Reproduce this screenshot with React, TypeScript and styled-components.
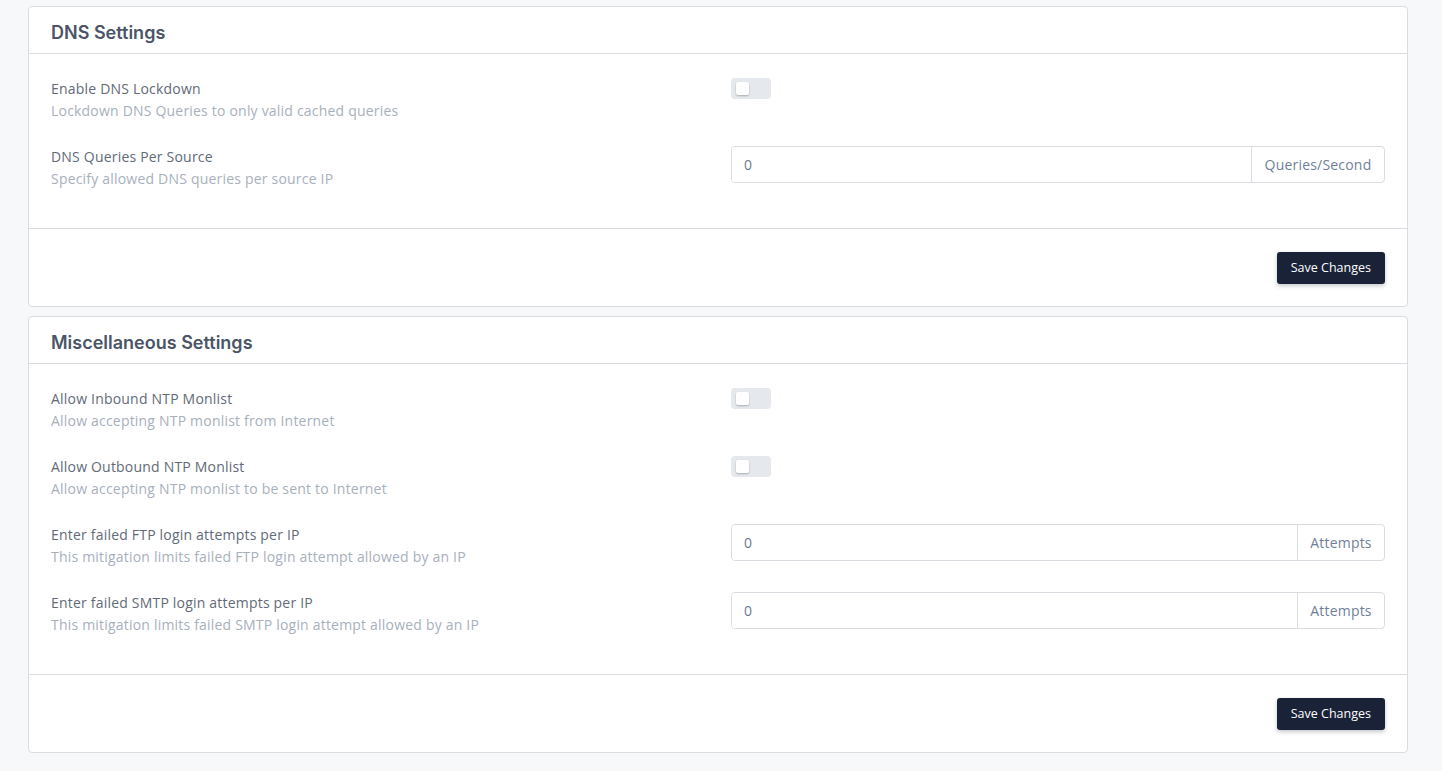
import React, { useState } from 'react';
import styled, { createGlobalStyle } from 'styled-components';

const GlobalStyle = createGlobalStyle`
    html, body {
        margin: 0;
        padding: 0;
        background: #f7f8fa;
        font-family: "Open Sans", "Liberation Sans", sans-serif;
    }
    * { box-sizing: border-box; }
`
const Page = styled.div`
    padding: 6px 34px 18px 28px;
    display: flex;
    flex-direction: column;
    gap: 9px;
`
const Card = styled.section`
    background: #fff;
    border: 1px solid #d9dce1;
    border-radius: 4px;
`
const CardHeader = styled.div`
    height: 47px;
    padding: 5px 22px 0;
    display: flex;
    align-items: center;
    border-bottom: 1px solid #d9dce1;
`
const Title = styled.h2`
    margin: 0;
    font-family: Inter, "Open Sans", sans-serif;
    font-size: 18px;
    font-weight: 600;
    color: #4a5568;
`
const CardBody = styled.div`
    padding: 24px 22px 14px;
    border-bottom: 1px solid #d9dce1;
`
const Row = styled.div`
    display: grid;
    grid-template-columns: 1fr 1fr;
    column-gap: 26px;
    height: 44px;
    margin-bottom: 24px;
`
const Info = styled.div`
    display: flex;
    flex-direction: column;
    letter-spacing: 0.2px;
`
const Label = styled.div`
    font-size: 14px;
    line-height: 21px;
    color: #626a78;
`
const Hint = styled.div`
    font-size: 14px;
    line-height: 23px;
    color: #a8b0bc;
`
const Switch = styled.button<{ $on: boolean }>`
    width: 40px;
    height: 21px;
    border: none;
    border-radius: 4px;
    padding: 4px 5px;
    background: ${(p) => (p.$on ? '#1a2238' : '#e5e8ec')};
    display: flex;
    justify-content: ${(p) => (p.$on ? 'flex-end' : 'flex-start')};
    cursor: pointer;
`
const Knob = styled.span`
    width: 13px;
    height: 13px;
    border-radius: 2px;
    background: #fff;
    box-shadow: 0 1px 2px rgba(0,0,0,0.25);
`
const InputGroup = styled.div`
    display: flex;
    height: 37px;
    border: 1px solid #d9dce1;
    border-radius: 4px;
    overflow: hidden;
`
const Input = styled.input`
    flex: 1;
    min-width: 0;
    border: none;
    outline: none;
    padding: 0 12px;
    font-family: inherit;
    font-size: 14px;
    color: #6b7a90;
`
const Addon = styled.span<{ $w: number }>`
    width: ${(p) => p.$w}px;
    border-left: 1px solid #d9dce1;
    display: flex;
    align-items: center;
    justify-content: center;
    font-size: 14px;
    letter-spacing: 0.2px;
    color: #6f7f99;
`
const CardFooter = styled.div`
    height: 77px;
    padding: 0 22px;
    display: flex;
    align-items: center;
    justify-content: flex-end;
`
const SaveButton = styled.button`
    height: 32px;
    padding: 0 14px;
    border: none;
    border-radius: 3px;
    background: #1a2238;
    color: #fff;
    font-family: inherit;
    font-size: 12.5px;
    box-shadow: 0 2px 4px rgba(26,34,56,0.25);
    cursor: pointer;
`

type Field =
    | { kind: 'toggle'; label: string; hint: string }
    | { kind: 'input'; label: string; hint: string; unit: string; unitWidth: number };

const Toggle: React.FC = () => {
    const [on, setOn] = useState(false);
    return (
        <div>
            <Switch $on={on} onClick={() => setOn(!on)}><Knob /></Switch>
        </div>
    );
}

const SettingsCard: React.FC<{ title: string; fields: Field[] }> = ({ title, fields }) => (
    <Card>
        <CardHeader><Title>{title}</Title></CardHeader>
        <CardBody>
            {fields.map((f) => (
                <Row key={f.label}>
                    <Info>
                        <Label>{f.label}</Label>
                        <Hint>{f.hint}</Hint>
                    </Info>
                    {f.kind === 'toggle' ? (
                        <Toggle />
                    ) : (
                        <div>
                            <InputGroup>
                                <Input defaultValue="0" />
                                <Addon $w={f.unitWidth}>{f.unit}</Addon>
                            </InputGroup>
                        </div>
                    )}
                </Row>
            ))}
        </CardBody>
        <CardFooter>
            <SaveButton type="button">Save Changes</SaveButton>
        </CardFooter>
    </Card>
)

const dnsFields: Field[] = [
    { kind: 'toggle', label: 'Enable DNS Lockdown', hint: 'Lockdown DNS Queries to only valid cached queries' },
    { kind: 'input', label: 'DNS Queries Per Source', hint: 'Specify allowed DNS queries per source IP', unit: 'Queries/Second', unitWidth: 133 },
];

const miscFields: Field[] = [
    { kind: 'toggle', label: 'Allow Inbound NTP Monlist', hint: 'Allow accepting NTP monlist from Internet' },
    { kind: 'toggle', label: 'Allow Outbound NTP Monlist', hint: 'Allow accepting NTP monlist to be sent to Internet' },
    { kind: 'input', label: 'Enter failed FTP login attempts per IP', hint: 'This mitigation limits failed FTP login attempt allowed by an IP', unit: 'Attempts', unitWidth: 87 },
    { kind: 'input', label: 'Enter failed SMTP login attempts per IP', hint: 'This mitigation limits failed SMTP login attempt allowed by an IP', unit: 'Attempts', unitWidth: 87 },
];

const App: React.FC = () => (
    <>
        <GlobalStyle />
        <Page>
            <SettingsCard title="DNS Settings" fields={dnsFields} />
            <SettingsCard title="Miscellaneous Settings" fields={miscFields} />
        </Page>
    </>
)

export default App;
